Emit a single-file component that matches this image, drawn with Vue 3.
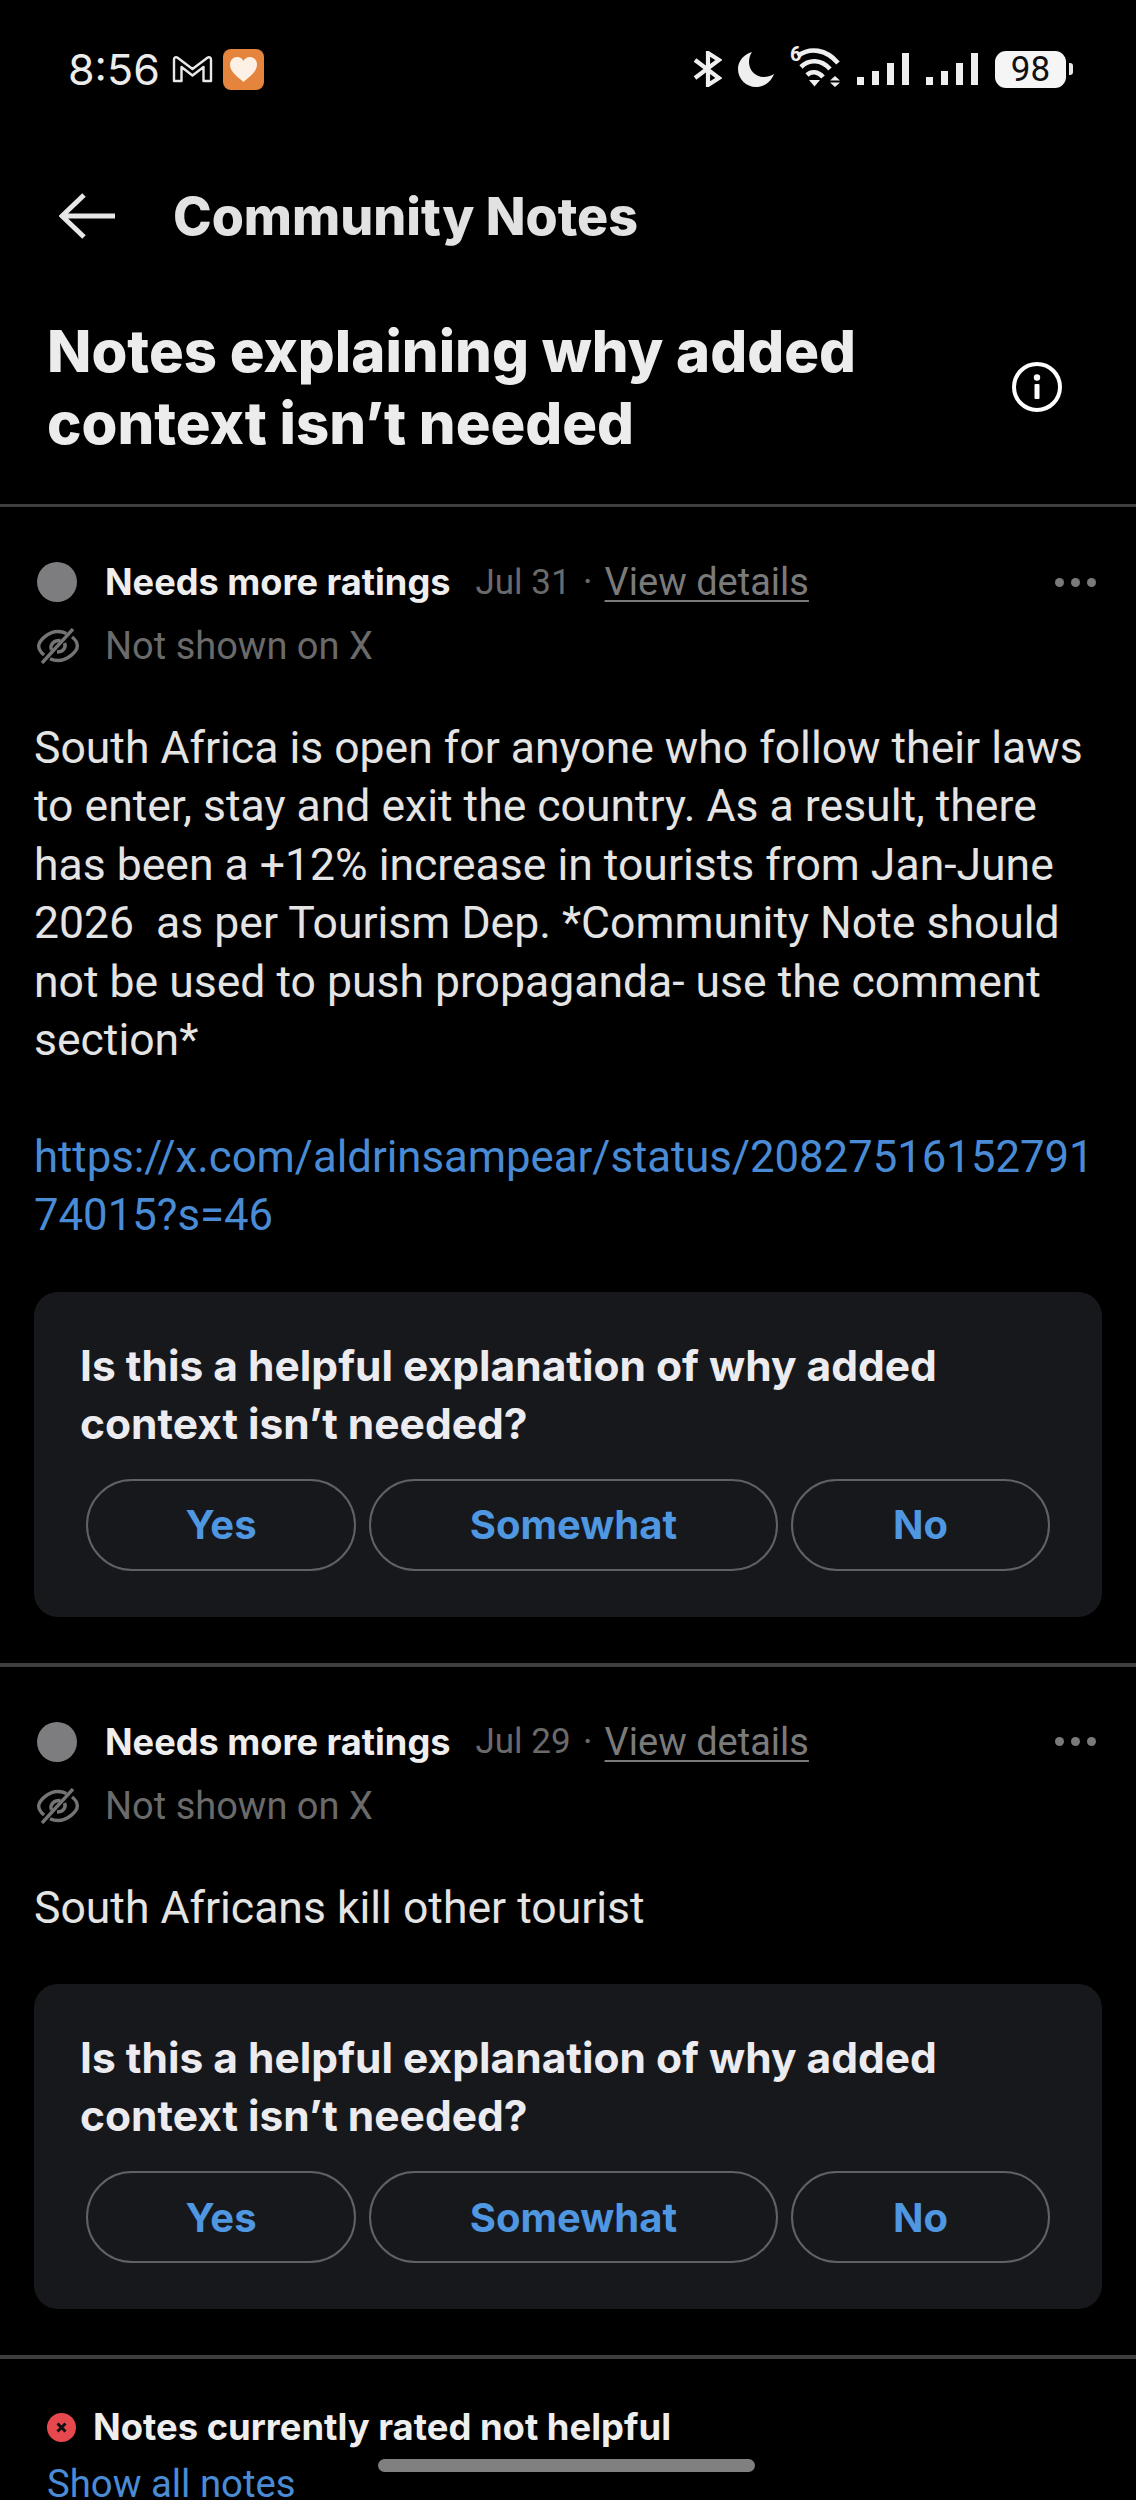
<script setup>
const question = 'Is this a helpful explanation of why added\ncontext isn’t needed?'
const options = ['Yes', 'Somewhat', 'No']

const notes = [
  {
    id: 1,
    date: 'Jul 31',
    body: 'South Africa is open for anyone who follow their laws\nto enter, stay and exit the country. As a result, there\nhas been a +12% increase in tourists from Jan-June\n2026  as per Tourism Dep. *Community Note should\nnot be used to push propaganda- use the comment\nsection*',
    link: 'https://x.com/aldrinsampear/status/20827516152791\n74015?s=46'
  },
  {
    id: 2,
    date: 'Jul 29',
    body: 'South Africans kill other tourist',
    link: ''
  }
]
</script>

<template>
  <div class="page">
    <div class="status-bar">
      <div class="status-left">
        <span class="time">8:56</span>
        <svg class="gmail" viewBox="0 0 41 28" fill="none" stroke="#e8e8e8" stroke-width="2.4" stroke-linejoin="round">
          <path d="M2 4.5C2 2.5 4 1.6 5.6 2.8L20.5 14 35.4 2.8C37 1.6 39 2.5 39 4.5V26H31.5V12L20.5 20.5 9.5 12V26H2Z" />
        </svg>
        <svg class="app-tile" viewBox="0 0 41 41">
          <rect width="41" height="41" rx="8" fill="#e5843c" />
          <path d="M20.5 33C15 28 7 23 7 15.5 7 11 10.5 8 14 8c3 0 5.2 1.500 6.500 4C21.800 9.500 24 8 27 8c3.500 0 7 3 7 7.500C34 23 26 28 20.500 33Z" fill="#fdf1e6" />
        </svg>
      </div>
      <div class="status-right">
        <svg class="bt" viewBox="0 0 29 36" fill="none" stroke="#efefef" stroke-width="4.200">
          <path d="M2 9 26 27 15 34V2L26 9 2 27" />
        </svg>
        <svg class="moon" viewBox="0 0 37 36">
          <path d="M14 1C6 3 0 10 0 18c0 10 8 18 18 18 8 0 15-5 18-13-3 2-7 3-10 3C17 26 11 19 11 11c0-4 1-7 3-10Z" fill="#efefef" />
        </svg>
        <svg class="wifi" viewBox="0 0 50 41" fill="none" stroke="#efefef" stroke-width="4.600">
          <text x="0" y="15" class="wifi-six">6</text>
          <path d="M8 10C20 1 36 3 48 17" />
          <path d="M11 21C19 13 31 13 40 23" />
          <path d="M17 29C21 25 28 25 33 31" />
          <path d="M19 34H30L24.500 40.500Z" fill="#efefef" stroke="none" />
          <path d="M40 34.500H50L45 30ZM40 36.500H50L45 41Z" fill="#efefef" stroke="none" />
        </svg>
        <div v-for="n in 2" :key="n" class="signal">
          <span class="bar b1"></span>
          <span class="bar b2"></span>
          <span class="bar b3"></span>
          <span class="bar b4"></span>
        </div>
        <div class="battery">98</div>
        <span class="battery-nub"></span>
      </div>
    </div>

    <div class="nav">
      <svg class="back" viewBox="0 0 56 46" fill="none" stroke="#e7e7e7" stroke-width="5">
        <path d="M25 2 3 23 25 44M3 23H56" />
      </svg>
      <span class="nav-title">Community Notes</span>
    </div>

    <div class="title-row">
      <h1 class="title">Notes explaining why added<br />context isn’t needed</h1>
      <svg class="info" viewBox="0 0 50 50">
        <circle cx="25" cy="25" r="23" fill="none" stroke="#fff" stroke-width="4" />
        <circle cx="25" cy="15.500" r="3.200" fill="#fff" />
        <rect x="22.500" y="22" width="5" height="15" rx="1" fill="#fff" />
      </svg>
    </div>

    <section v-for="note in notes" :key="note.id" class="note">
      <div class="meta-row">
        <span class="status-dot"></span>
        <span class="status-label">Needs more ratings</span>
        <span class="meta-date">{{ note.date }}</span>
        <span class="meta-sep">·</span>
        <span class="meta-link">View details</span>
        <span class="more"><i></i><i></i><i></i></span>
      </div>
      <div class="meta-row">
        <svg class="eye-off" viewBox="0 0 42 36" fill="none" stroke="#747474" stroke-width="3.400">
          <path d="M7 27C3.500 24 1.700 21 1.700 18 1.700 13 11 3.500 21 3.500c3 0 6 .8 8.500 2M35 9c3.500 2.600 5.300 6 5.300 9 0 5-9.300 14.500-19.300 14.500-3 0-5.500-.6-8-1.700" />
          <path d="M14.500 22c-2-5 2-10 9-9.500M27.500 15c2 5-1.500 9-7.500 9" />
          <path d="M5 35 36 1" />
        </svg>
        <span class="not-shown">Not shown on X</span>
      </div>

      <p class="body">{{ note.body }}</p>
      <p v-if="note.link" class="link">{{ note.link }}</p>

      <div class="card">
        <p class="question">{{ question }}</p>
        <div class="options">
          <button v-for="opt in options" :key="opt" class="option">{{ opt }}</button>
        </div>
      </div>
    </section>

    <div class="footer-block">
      <div class="not-helpful">
        <svg class="x-dot" viewBox="0 0 29 29">
          <circle cx="14.500" cy="14.500" r="14.500" fill="#e5484d" />
          <path d="M10.500 10.500 18.500 18.500M18.500 10.500 10.500 18.500" stroke="#111" stroke-width="3" />
        </svg>
        <span>Notes currently rated not helpful</span>
      </div>
      <div class="show-all">Show all notes</div>
    </div>

    <div class="home-bar"></div>
  </div>
</template>

<style>
html,
body {
  background: #000;
}
</style>

<style scoped>
.page {
  position: relative;
  width: 1136px;
  height: 2500px;
  overflow: hidden;
  background: #000;
  color: #e7e9ea;
  font-family: Inter, "Liberation Sans", sans-serif;
}

.status-bar {
  height: 138px;
  padding: 0 63px 0 68px;
  display: flex;
  align-items: center;
  justify-content: space-between;
}

.status-left,
.status-right {
  display: flex;
  align-items: center;
}

.time {
  font-family: Inter, sans-serif;
  font-size: 43px;
  color: #ececec;
  margin-right: 12px;
}

.gmail {
  width: 41px;
  height: 28px;
  margin-right: 10px;
}

.app-tile {
  width: 41px;
  height: 41px;
}

.bt {
  width: 29px;
  height: 36px;
  margin-right: 16px;
}

.moon {
  width: 37px;
  height: 36px;
  margin-right: 15px;
}

.wifi {
  width: 50px;
  height: 41px;
  margin-right: 17px;
  margin-top: -5px;
}

.wifi-six {
  font-family: Roboto, sans-serif;
  font-size: 20px;
  font-weight: 700;
  fill: #efefef;
  stroke: none;
}

.signal {
  width: 52px;
  height: 32px;
  margin-right: 17px;
  display: flex;
  align-items: flex-end;
  justify-content: space-between;
}

.bar {
  width: 7px;
  background: #efefef;
}

.b1 { height: 8px; }
.b2 { height: 14px; }
.b3 { height: 22px; }
.b4 { height: 32px; }

.battery {
  width: 71px;
  height: 37px;
  border-radius: 11px;
  background: #f5f5f5;
  color: #111;
  font-family: Roboto, sans-serif;
  font-size: 35px;
  line-height: 37px;
  text-align: center;
}

.battery-nub {
  width: 4px;
  height: 12px;
  margin-left: 3px;
  border-radius: 0 3px 3px 0;
  background: #e8e8e8;
}

.nav {
  height: 156px;
  padding-left: 59px;
  display: flex;
  align-items: center;
}

.back {
  width: 56px;
  height: 46px;
  margin-right: 58px;
}

.nav-title {
  font-size: 52px;
  font-weight: 800;
  color: #e2e2e2;
}

.title-row {
  padding: 21px 0 45px 47px;
  border-bottom: 3px solid #3e3e3e;
  display: flex;
  align-items: center;
}

.title {
  margin: 0;
  width: 965px;
  font-size: 58px;
  line-height: 72px;
  font-weight: 800;
  color: #ececec;
}

.info {
  width: 50px;
  height: 50px;
}

.note {
  padding: 43px 34px 46px;
  border-bottom: 4px solid #3e3e3e;
}

.meta-row {
  height: 64px;
  display: flex;
  align-items: center;
  font-size: 36.200px;
}

.status-dot {
  width: 40px;
  height: 40px;
  margin: 0 28px 0 3px;
  border-radius: 50%;
  background: #7d7d7f;
}

.status-label {
  font-weight: 700;
  color: #eeeeee;
  margin-right: 25px;
}

.meta-date,
.meta-sep,
.meta-link,
.not-shown {
  font-family: Roboto, sans-serif;
  font-size: 38px;
}

.meta-date {
  font-size: 35px;
}

.meta-date,
.meta-sep,
.not-shown {
  color: #6a6a6a;
}

.meta-sep {
  margin: 0 12px;
}

.meta-link {
  color: #7a7a7a;
  text-decoration: underline;
  text-underline-offset: 5px;
  text-decoration-thickness: 2px;
}

.more {
  margin-left: auto;
  margin-right: 6px;
  display: flex;
  gap: 7px;
}

.more i {
  width: 9px;
  height: 9px;
  border-radius: 50%;
  background: #7a7a7a;
}

.eye-off {
  width: 42px;
  height: 36px;
  margin: 0 26px 0 3px;
}

.body,
.link {
  margin: 0;
  font-family: Roboto, sans-serif;
  font-size: 44.500px;
  line-height: 58.400px;
  white-space: pre;
}

.body {
  padding-top: 41px;
  color: #e4e4e4;
}

.link {
  margin-top: 58.400px;
  font-size: 43.700px;
  color: #4a8bd6;
}

.card {
  margin-top: 47px;
  padding: 45px 0 46px 46px;
  border-radius: 24px;
  background: #17181c;
}

.question {
  margin: 0;
  font-size: 42.500px;
  line-height: 58px;
  font-weight: 650;
  white-space: pre;
  color: #ececf0;
}

.options {
  margin: 26px 0 0 6px;
  display: grid;
  grid-template-columns: 270px 409px 259px;
  gap: 13px;
}

.option {
  height: 92px;
  padding: 0;
  border: 2.500px solid #5e6268;
  border-radius: 46px;
  background: transparent;
  color: #4f97e0;
  font-family: inherit;
  font-size: 40px;
  font-weight: 650;
}

.footer-block {
  padding: 47px 0 0 47px;
}

.not-helpful {
  height: 42px;
  display: flex;
  align-items: center;
  font-size: 36.400px;
  font-weight: 700;
  color: #eeeeee;
}

.x-dot {
  width: 29px;
  height: 29px;
  margin-right: 17px;
}

.show-all {
  margin-top: 12px;
  font-family: Roboto, sans-serif;
  font-size: 38.300px;
  line-height: 48px;
  color: #4a8bd6;
}

.home-bar {
  position: absolute;
  left: 378px;
  top: 2459px;
  width: 377px;
  height: 13px;
  border-radius: 7px;
  background: #808080;
}
</style>
